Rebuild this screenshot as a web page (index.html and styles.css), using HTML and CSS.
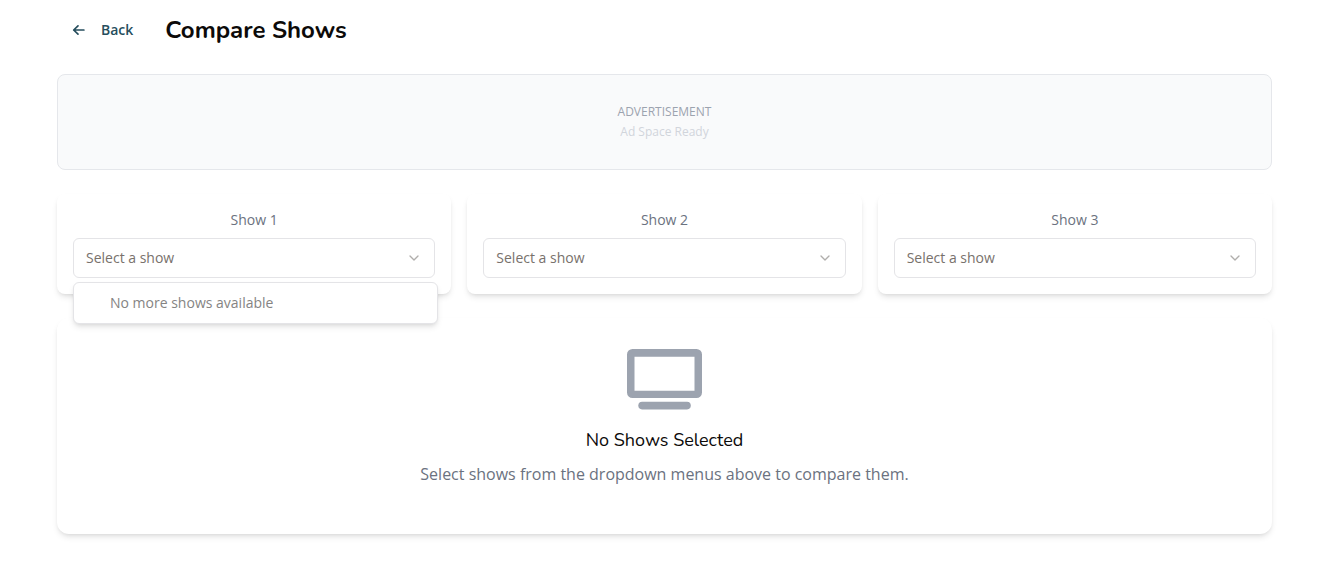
FILE: index.html
```html
<!DOCTYPE html>
<html lang="en">
<head>
<meta charset="utf-8">
<meta name="viewport" content="width=device-width, initial-scale=1">
<title>Compare Shows</title>
<link rel="stylesheet" href="styles.css">
</head>
<body>
<main class="page">
  <header class="page-header">
    <button class="back" type="button">
      <svg class="back-icon" viewBox="0 0 16 16" aria-hidden="true"><path d="M7 3.800L2.700 8 7 12.200M2.700 8h10.200"/></svg>
      Back
    </button>
    <h1 class="title">Compare Shows</h1>
  </header>

  <aside class="ad">
    <p class="ad-label">ADVERTISEMENT</p>
    <p class="ad-note">Ad Space Ready</p>
  </aside>

  <section class="pickers">
    <div class="picker card">
      <label class="picker-label" for="show-1">Show 1</label>
      <div class="select-wrap">
        <select class="select" id="show-1"><option>Select a show</option></select>
        <svg class="chevron" viewBox="0 0 24 24" aria-hidden="true"><path d="M6 9l6 6 6-6"/></svg>
        <div class="menu">No more shows available</div>
      </div>
    </div>
    <div class="picker card">
      <label class="picker-label" for="show-2">Show 2</label>
      <div class="select-wrap">
        <select class="select" id="show-2"><option>Select a show</option></select>
        <svg class="chevron" viewBox="0 0 24 24" aria-hidden="true"><path d="M6 9l6 6 6-6"/></svg>
      </div>
    </div>
    <div class="picker card">
      <label class="picker-label" for="show-3">Show 3</label>
      <div class="select-wrap">
        <select class="select" id="show-3"><option>Select a show</option></select>
        <svg class="chevron" viewBox="0 0 24 24" aria-hidden="true"><path d="M6 9l6 6 6-6"/></svg>
      </div>
    </div>
  </section>

  <section class="empty card">
    <svg class="tv" viewBox="0 0 75 61" aria-hidden="true">
      <path fill-rule="evenodd" d="M5.500 0h64a5.500 5.500 0 0 1 5.500 5.500v38a5.500 5.500 0 0 1-5.500 5.500h-64A5.500 5.500 0 0 1 0 43.500v-38A5.500 5.500 0 0 1 5.500 0zM7.500 7.700v34h60v-34z"/>
      <rect x="11.300" y="52.800" width="52.500" height="7.600" rx="3.800"/>
    </svg>
    <h2 class="empty-title">No Shows Selected</h2>
    <p class="empty-text">Select shows from the dropdown menus above to compare them.</p>
  </section>
</main>
</body>
</html>
```
FILE: styles.css
```css
* {
  box-sizing: border-box;
}

body,
h1,
h2,
p {
  margin: 0;
}

body {
  background: #fff;
  color: #0c0a09;
  font-family: "Open Sans", sans-serif;
  font-size: 14px;
  line-height: 20px;
}

.page {
  display: flex;
  flex-direction: column;
  gap: 24px;
  padding: 10px 54px 48px 57px;
}

.page-header {
  display: flex;
  align-items: center;
  gap: 16px;
}

.back {
  display: flex;
  align-items: center;
  gap: 14px;
  height: 40px;
  padding: 0 16px 0 14px;
  border: 0;
  background: none;
  color: #264e5d;
  font: 600 14px/20px "Open Sans", sans-serif;
}

.back-icon {
  width: 16px;
  height: 16px;
  fill: none;
  stroke: currentColor;
  stroke-width: 1.7;
  stroke-linecap: round;
  stroke-linejoin: round;
}

.title {
  font: 700 24px/32px Nunito, Lato, sans-serif;
}

.ad {
  padding: 27px 16px;
  border: 1px solid #e5e7eb;
  border-radius: 8px;
  background: #f9fafb;
  text-align: center;
  font-size: 12px;
}

.ad-label {
  color: #9ca3af;
}

.ad-note {
  color: #d1d5db;
}

.card {
  border-radius: 8px;
  background: #fff;
  box-shadow: 0 4px 6px -1px rgb(0 0 0 / 10%), 0 2px 4px -2px rgb(0 0 0 / 10%);
}

.pickers {
  display: grid;
  grid-template-columns: repeat(3, 1fr);
  gap: 16px;
}

.picker {
  display: flex;
  flex-direction: column;
  gap: 8px;
  padding: 16px;
}

.picker-label {
  color: #6b7280;
  text-align: center;
}

.select-wrap {
  display: grid;
  position: relative;
  align-items: center;
}

.select {
  grid-area: 1 / 1;
  width: 100%;
  height: 40px;
  padding: 0 36px 0 12px;
  border: 1px solid #e4e4e7;
  border-radius: 6px;
  appearance: none;
  background: #fff;
  color: #78716c;
  font: 14px/20px "Open Sans", sans-serif;
}

.chevron {
  grid-area: 1 / 1;
  justify-self: end;
  width: 16px;
  height: 16px;
  margin-right: 13px;
  fill: none;
  stroke: #b0aeac;
  stroke-width: 2;
  stroke-linecap: round;
  stroke-linejoin: round;
  pointer-events: none;
}

.menu {
  position: absolute;
  z-index: 1;
  top: 44px;
  left: 0;
  right: -3px;
  padding: 10px 36px;
  border: 1px solid #e4e4e7;
  border-radius: 6px;
  background: #fff;
  box-shadow: 0 4px 6px -1px rgb(0 0 0 / 10%), 0 2px 4px -2px rgb(0 0 0 / 10%);
  color: #858483;
}

.empty {
  display: flex;
  flex-direction: column;
  align-items: center;
  padding: 31px 24px 48px;
  border-radius: 12px;
  text-align: center;
}

.tv {
  width: 75px;
  height: 61px;
  margin-bottom: 16px;
  fill: #9ca3af;
}

.empty-title {
  margin-bottom: 8px;
  font: 400 18px/28px Nunito, Lato, sans-serif;
}

.empty-text {
  color: #6b7280;
  font-size: 16px;
  line-height: 24px;
}
```
